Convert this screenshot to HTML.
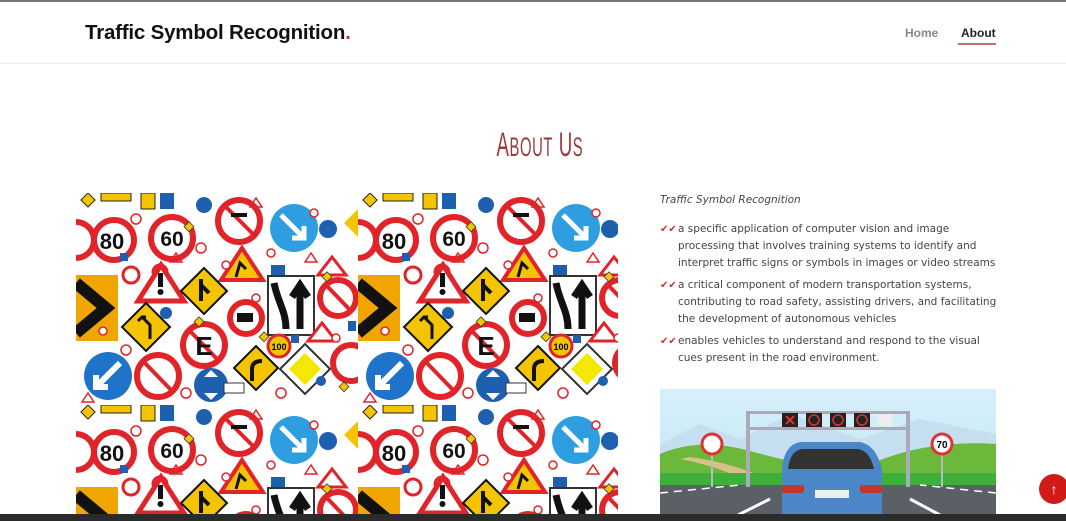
<!DOCTYPE html>
<html><head><meta charset="utf-8"><style>
*{margin:0;padding:0;box-sizing:border-box}
body{width:1066px;height:521px;overflow:hidden;background:#fff;font-family:"Liberation Sans",sans-serif;position:relative}
.top{position:absolute;left:0;top:0;width:1066px;height:2px;background:#777}
.hdr{position:absolute;left:0;top:2px;width:1066px;height:62px;border-bottom:1px solid #eee}
.logo{position:absolute;left:85px;top:19px;font-size:20.5px;font-weight:bold;color:#111;letter-spacing:-0.2px}
.logo span{color:#c0392b}
.nav{position:absolute;top:24px;font-size:12px;font-weight:bold}
.r{position:absolute;left:660px;font-family:"DejaVu Sans",sans-serif;color:#444;font-size:11px}
.li{position:absolute;left:660px;width:340px;font-family:"DejaVu Sans",sans-serif;color:#444;font-size:10.5px;line-height:17px;padding-left:18px}
.li i{position:absolute;left:0;top:0;color:#c0392b;font-style:normal;font-size:10px}
.bar{position:absolute;left:0;top:514px;width:1066px;height:7px;background:#2b2b2b}
.up{position:absolute;left:1039px;top:474px;width:30px;height:30px;border-radius:50%;background:#d11a1a;color:#fff;text-align:center;font-size:14px;line-height:30px}
</style></head><body>
<div class="top"></div>
<div class="hdr">
<div class="logo">Traffic Symbol Recognition<span>.</span></div>
<div class="nav" style="left:905px;color:#888">Home</div>
<div class="nav" style="left:961px;color:#222">About</div>
<div style="position:absolute;left:958px;top:41px;width:38px;height:2px;background:#c07070"></div>
</div>
<div style="position:absolute;left:0;top:126px;width:1080px;text-align:center;"><span style="display:inline-block;font-family:'Liberation Sans Narrow','Liberation Sans',sans-serif;font-size:34px;font-weight:normal;color:#9a3a3a;transform:scaleX(0.55);letter-spacing:1px">A<span style="font-size:27px">BOUT</span> U<span style="font-size:27px">S</span></span></div>

<svg style="position:absolute;left:76px;top:193px" width="542" height="322">
<defs><pattern id="p" width="282" height="212" patternUnits="userSpaceOnUse">
<rect width="282" height="212" fill="#fff"/>
<g fill="#f5c400" stroke="#222" stroke-width="1"><rect x="7" y="2" width="10" height="10" transform="rotate(45 12 7)"/><rect x="25" y="0" width="30" height="8"/><rect x="65" y="0" width="14" height="16"/></g>
<rect x="84" y="0" width="14" height="16" fill="#1f5fb0"/>
<circle cx="128" cy="12" r="8" fill="#1f5fb0"/>
<g fill="none" stroke="#e0242a" stroke-width="6">
<circle cx="38" cy="47" r="20" fill="#fff"/><circle cx="96" cy="45" r="21" fill="#fff"/><circle cx="163" cy="28" r="21" fill="#fff"/>
<circle cx="262" cy="105" r="18" fill="#fff"/><circle cx="170" cy="125" r="16" fill="#fff"/><circle cx="128" cy="152" r="21" fill="#fff"/><circle cx="82" cy="183" r="21" fill="#fff"/><circle cx="275" cy="170" r="18" fill="#fff"/><circle cx="0" cy="47" r="18" fill="#fff"/>
<circle cx="84" cy="79" r="7" stroke-width="3"/><circle cx="55" cy="82" r="8" stroke-width="3"/></g>
<g stroke="#e0242a" stroke-width="4"><line x1="150" y1="14" x2="178" y2="42"/><line x1="112" y1="136" x2="143" y2="168"/><line x1="66" y1="167" x2="97" y2="199"/><line x1="250" y1="92" x2="275" y2="118"/></g>
<g font-family="Liberation Sans" font-weight="bold" fill="#111" text-anchor="middle"><text x="36" y="56" font-size="22">80</text><text x="96" y="53" font-size="21">60</text><text x="128" y="162" font-size="26">E</text></g>
<rect x="155" y="20" width="16" height="4" fill="#111"/>
<circle cx="218" cy="35" r="24" fill="#2e9ee0"/><path d="M205 22L228 45M228 33V45H216" stroke="#fff" stroke-width="5" fill="none"/>
<circle cx="252" cy="36" r="9" fill="#1f5fb0"/>
<path d="M85 72L62 108H108Z" fill="#fff" stroke="#e0242a" stroke-width="5"/><rect x="82" y="80" width="5" height="14" fill="#111"/><circle cx="84.5" cy="99" r="3" fill="#111"/>
<path d="M166 55L145 87H187Z" fill="#f5c400" stroke="#e0242a" stroke-width="4"/><path d="M160 84l4-14 6 6" stroke="#111" stroke-width="3" fill="none"/>
<path d="M128 75L151 98L128 121L105 98Z" fill="#f5c400" stroke="#111" stroke-width="2"/><path d="M125 86v22M125 92l8 8" stroke="#111" stroke-width="4"/>
<rect x="192" y="83" width="46" height="59" fill="#fff" stroke="#333" stroke-width="2"/><path d="M198 90c4 20 12 28 12 46M224 136V98M216 104l8-12 8 12" stroke="#111" stroke-width="7" fill="none"/>
<rect x="161" y="120" width="16" height="9" fill="#111"/>
<rect x="0" y="82" width="42" height="66" fill="#f0a500"/><path d="M0 90L30 115L0 140" stroke="#111" stroke-width="12" fill="none"/>
<path d="M70 110L94 134L70 158L46 134Z" fill="#f5c400" stroke="#111" stroke-width="2"/><path d="M74 146V132L66 124M62 128l4-4 4 0" stroke="#111" stroke-width="3" fill="none"/>
<circle cx="32" cy="183" r="24" fill="#1f73c8"/><path d="M44 170L20 194M20 182V194H32" stroke="#fff" stroke-width="6" fill="none"/>
<circle cx="135" cy="192" r="17" fill="#1f5fb0"/><path d="M128 184l7-7 7 7M128 200l7 7 7-7" fill="#fff"/>
<circle cx="203" cy="153" r="11" fill="#f5c400" stroke="#e0242a" stroke-width="3"/>
<text x="203" y="157" font-size="9" font-family="Liberation Sans" font-weight="bold" text-anchor="middle">100</text>
<path d="M180 153L202 175L180 197L158 175Z" fill="#f5c400" stroke="#111" stroke-width="2"/><path d="M176 188V176Q176 168 186 168" stroke="#111" stroke-width="4" fill="none"/>
<path d="M229 151L254 176L229 201L204 176Z" fill="#fff" stroke="#333" stroke-width="2"/><path d="M229 160L245 176L229 192L213 176Z" fill="#f5e800"/>
<path d="M256 64L242 82H270Z" fill="#fff" stroke="#e0242a" stroke-width="3"/>
<path d="M246 130L232 148H260Z" fill="#fff" stroke="#e0242a" stroke-width="3"/>
<path d="M268 30L282 16V44Z" fill="#f5c400"/>
<rect x="148" y="190" width="20" height="10" fill="#fff" stroke="#333"/>
<rect x="195" y="72" width="14" height="10" fill="#1f5fb0"/>
<g stroke="#e0242a" stroke-width="1.5" fill="#fff"><circle cx="60" cy="26" r="5"/><circle cx="125" cy="55" r="5"/><circle cx="195" cy="60" r="4"/><circle cx="238" cy="20" r="4"/><circle cx="150" cy="72" r="4"/><circle cx="50" cy="157" r="5"/><circle cx="110" cy="200" r="5"/><circle cx="260" cy="145" r="4"/><circle cx="205" cy="200" r="5"/><circle cx="180" cy="105" r="4"/><circle cx="27" cy="138" r="4"/></g>
<g fill="#f5c400" stroke="#333" stroke-width="0.8"><rect x="110" y="30" width="7" height="7" transform="rotate(45 113 33)"/><rect x="248" y="80" width="7" height="7" transform="rotate(45 251 83)"/><rect x="185" y="140" width="7" height="7" transform="rotate(45 188 143)"/><rect x="265" y="190" width="7" height="7" transform="rotate(45 268 193)"/><rect x="120" y="125" width="7" height="7" transform="rotate(45 123 128)"/></g>
<g fill="#1f5fb0"><rect x="272" y="128" width="8" height="10"/><rect x="44" y="60" width="8" height="8"/><rect x="215" y="142" width="8" height="8"/><circle cx="90" cy="120" r="6"/><circle cx="245" cy="188" r="5"/></g>
<g fill="none" stroke="#e0242a" stroke-width="1.5"><path d="M180 5L174 14H186Z"/><path d="M100 60L94 69H106Z"/><path d="M12 200L6 209H18Z"/><path d="M235 60L229 69H241Z"/></g>
</pattern></defs>
<rect width="542" height="322" fill="url(#p)"/>
</svg>

<div class="r" style="top:194px;font-style:italic;font-size:10.5px">Traffic Symbol Recognition</div>
<div class="li" style="top:221px"><i>✔︎✔︎</i>a specific application of computer vision and image processing that involves training systems to identify and interpret traffic signs or symbols in images or video streams</div>
<div class="li" style="top:277px"><i>✔︎✔︎</i>a critical component of modern transportation systems, contributing to road safety, assisting drivers, and facilitating the development of autonomous vehicles</div>
<div class="li" style="top:333px"><i>✔︎✔︎</i>enables vehicles to understand and respond to the visual cues present in the road environment.</div>

<svg style="position:absolute;left:660px;top:389px" width="336" height="126">
<defs><linearGradient id="s" x1="0" y1="0" x2="0" y2="1"><stop offset="0" stop-color="#d6f0fa"/><stop offset="1" stop-color="#bfe6f5"/></linearGradient></defs>
<rect width="336" height="126" fill="url(#s)"/>
<path d="M0 55L40 35L80 50L130 25L200 50L260 30L336 45V90H0Z" fill="#c6dff0"/>
<path d="M0 65Q40 48 90 62T180 80V96H0Z" fill="#6cb83a"/>
<path d="M30 68Q80 75 120 96H90Q70 80 20 70Z" fill="#d8c08a"/>
<path d="M200 80Q260 50 336 55V96H200Z" fill="#6cb83a"/>
<rect x="0" y="84" width="336" height="12" fill="#3fae3a"/>
<rect x="0" y="96" width="336" height="30" fill="#5b5f66"/>
<path d="M0 104L80 96M336 104L260 96" stroke="#fff" stroke-width="1.5" stroke-dasharray="8 6"/>
<path d="M78 126L110 110M250 110L280 126" stroke="#fff" stroke-width="3"/>
<g fill="#aab" ><rect x="86" y="22" width="4" height="76"/><rect x="246" y="22" width="4" height="76"/><rect x="86" y="22" width="164" height="3"/><rect x="86" y="38" width="164" height="3"/></g>
<g fill="#222"><rect x="122" y="24" width="16" height="14"/><rect x="146" y="24" width="16" height="14"/><rect x="170" y="24" width="16" height="14"/><rect x="194" y="24" width="16" height="14"/></g>
<g fill="none" stroke="#d33" stroke-width="1.5"><circle cx="154" cy="31" r="5"/><circle cx="178" cy="31" r="5"/><circle cx="202" cy="31" r="5"/></g>
<rect x="218" y="25" width="14" height="12" fill="#eee"/>
<path d="M126 27l8 8M134 27l-8 8" stroke="#e03030" stroke-width="2"/>
<rect x="51" y="60" width="2" height="38" fill="#bbb"/><circle cx="52" cy="55" r="10" fill="#fff" stroke="#d33" stroke-width="3"/>
<rect x="281" y="60" width="2" height="38" fill="#bbb"/><circle cx="282" cy="55" r="10" fill="#fff" stroke="#d33" stroke-width="3"/>
<text x="282" y="59" font-size="10" font-weight="bold" font-family="Liberation Sans" text-anchor="middle">70</text>
<path d="M122 126V80Q124 56 140 53H200Q216 56 222 80V126Z" fill="#4a86c8"/>
<path d="M128 80Q130 62 142 60H198Q210 62 214 80Z" fill="#333"/>
<rect x="122" y="96" width="22" height="8" rx="2" fill="#c0392b"/><rect x="200" y="96" width="22" height="8" rx="2" fill="#c0392b"/>
<rect x="155" y="101" width="34" height="8" fill="#eee"/>
</svg>

<div class="up">↑</div>
<div class="bar"></div>
</body></html>
